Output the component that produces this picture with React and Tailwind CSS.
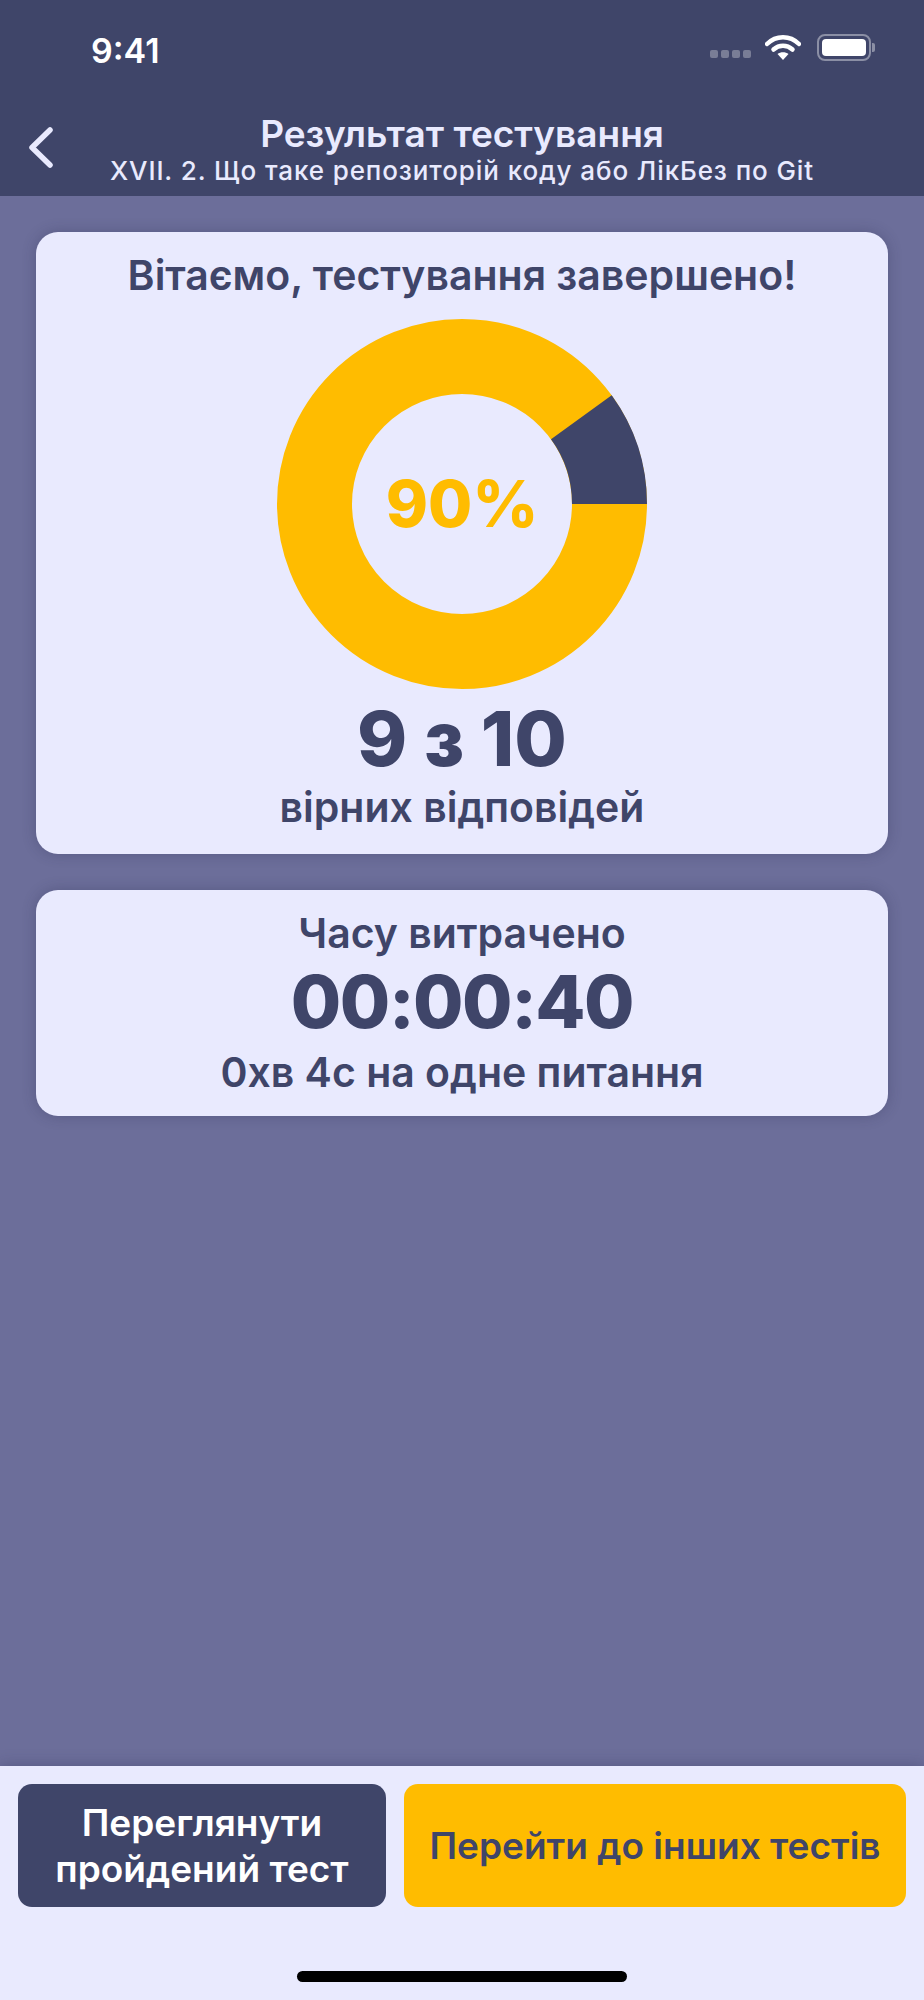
const navy = '#3f4569';

function StatusBar() {
  return (
    <div className="flex h-[100px] items-start justify-between pl-[91px] pr-[49px] pt-[33px]">
      <span className="text-[34px] leading-[36px] font-semibold text-white">9:41</span>
      <div className="flex items-center">
        <div className="mt-[14px] mr-[14px] flex gap-[3px]">
          <span className="h-[8px] w-[8px] rounded-[2px] bg-white/30" />
          <span className="h-[8px] w-[8px] rounded-[2px] bg-white/30" />
          <span className="h-[8px] w-[8px] rounded-[2px] bg-white/30" />
          <span className="h-[8px] w-[8px] rounded-[2px] bg-white/30" />
        </div>
        <svg width="36" height="28" viewBox="0 0 36 28" className="mr-[16px]">
          <path d="M2 11 C11 2 25 2 34 11" fill="none" stroke="#fff" strokeWidth="4.5" strokeLinecap="round" />
          <path d="M8.5 16.5 C14 11.5 22 11.5 27.5 16.5" fill="none" stroke="#fff" strokeWidth="4.5" strokeLinecap="round" />
          <path d="M18 27 L12.5 21 C15.5 18.6 20.5 18.6 23.5 21 Z" fill="#fff" />
        </svg>
        <div className="flex items-center">
          <div className="flex h-[27px] w-[54px] items-center justify-center rounded-[8px] border-[2.5px] border-white/40">
            <div className="h-[17px] w-[44px] rounded-[4px] bg-white" />
          </div>
          <div className="ml-[1px] h-[9px] w-[3px] rounded-r-[2px] bg-white/40" />
        </div>
      </div>
    </div>
  );
}

function Header() {
  return (
    <div className="relative h-[196px] bg-[#3f4569]">
      <StatusBar />
      <svg width="32" height="48" viewBox="0 0 32 48" className="absolute left-[26px] top-[124px]">
        <path d="M24 6 L6 23.5 L24 41" fill="none" stroke="#e9eafe" strokeWidth="5.5" strokeLinecap="round" strokeLinejoin="round" />
      </svg>
      <div className="flex flex-col items-center pt-[12px] text-[#e9eafe]">
        <div className="text-[37px] leading-[44px] font-semibold">Результат тестування</div>
        <div className="text-[26px] leading-[30px] font-medium tracking-[0.9px]">XVII. 2. Що таке репозиторій коду або ЛікБез по Git</div>
      </div>
    </div>
  );
}

function Donut() {
  return (
    <div className="relative mx-auto mt-[21px] h-[370px] w-[370px]">
      <svg width="370" height="370" viewBox="0 0 370 370">
        <circle cx="185" cy="185" r="147.5" fill="none" stroke="#ffbc00" strokeWidth="75" />
        <path d="M370 185 A185 185 0 0 0 334.7 76.3 L274 120.3 A110 110 0 0 1 295 185 Z" fill={navy} />
      </svg>
      <div className="absolute inset-0 flex items-center justify-center text-[64px] font-extrabold text-[#ffbc00]">90%</div>
    </div>
  );
}

export default function App() {
  return (
    <div className="flex h-[2000px] w-[924px] flex-col bg-[#6c6e9a] font-['Inter',sans-serif] text-[#3f4569]">
      <Header />
      <div className="flex flex-1 flex-col gap-[36px] px-[36px] pt-[36px]">
        <div className="h-[622px] rounded-[22px] bg-[#e9eafe] pt-[20px] text-center shadow-[0_0_14px_rgba(40,42,80,0.3)]">
          <div className="text-[41px] leading-[46px] font-semibold">Вітаємо, тестування завершено!</div>
          <Donut />
          <div className="mt-[3px] text-[76px] leading-[92px] font-extrabold">9 з 10</div>
          <div className="text-[41px] leading-[46px] font-semibold">вірних відповідей</div>
        </div>
        <div className="h-[226px] rounded-[22px] bg-[#e9eafe] pt-[20px] text-center shadow-[0_0_14px_rgba(40,42,80,0.3)]">
          <div className="text-[41px] leading-[46px] font-semibold">Часу витрачено</div>
          <div className="mt-[4px] text-[73px] leading-[84px] font-extrabold tracking-[-1.5px]">00:00:40</div>
          <div className="mt-[5px] text-[41px] leading-[46px] font-semibold">0хв 4с на одне питання</div>
        </div>
      </div>
      <div className="relative h-[234px] bg-[#e9eafe] px-[18px] pt-[18px] shadow-[0_0_14px_rgba(40,42,80,0.35)]">
        <div className="flex h-[123px] gap-[18px]">
          <button className="w-[368px] rounded-[14px] bg-[#3f4569] text-[37px] leading-[46px] font-semibold text-white">
            Переглянути<br />пройдений тест
          </button>
          <button className="flex-1 rounded-[14px] bg-[#ffbc00] text-[37px] font-semibold text-[#3f4569]">
            Перейти до інших тестів
          </button>
        </div>
        <div className="absolute bottom-[18px] left-[297px] h-[11px] w-[330px] rounded-full bg-black" />
      </div>
    </div>
  );
}
